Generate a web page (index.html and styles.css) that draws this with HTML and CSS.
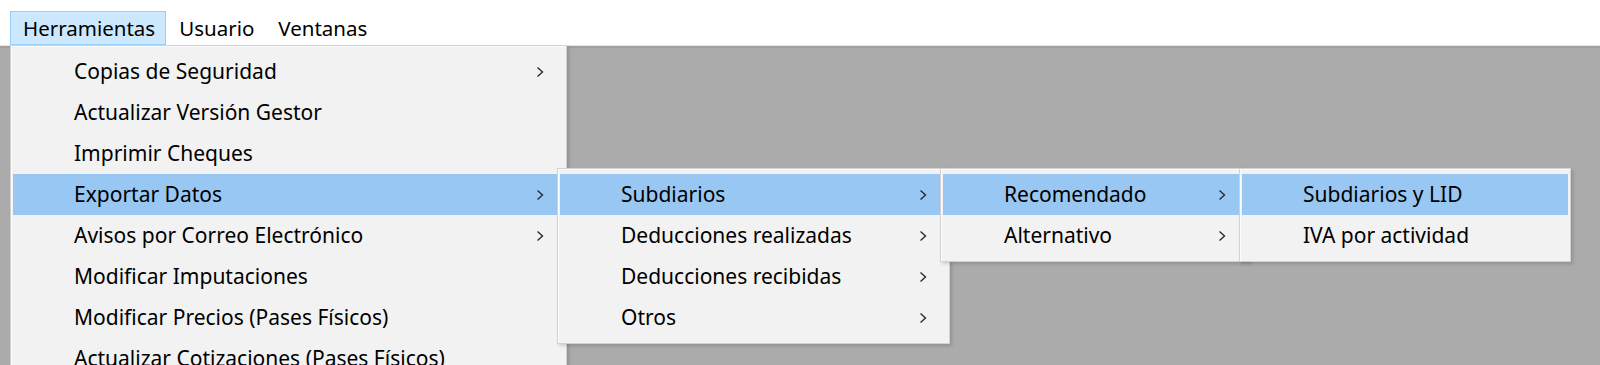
FILE: index.html
```html
<!DOCTYPE html>
<html>
<head>
    <title>Gestor - Herramientas</title>
    <meta charset="utf-8">
    <link rel="stylesheet" href="styles.css">
</head>
<body>
    <div class="window">
        <div class="menubar">
            <div class="bar-item open">Herramientas
                <div class="menu menu-main">
                    <div class="menu-item has-sub"><span class="label">Copias de Seguridad</span><svg class="arrow" viewBox="0 0 8 12"><polyline points="1.5,1.5 6.5,6 1.5,10.5"/></svg></div>
                    <div class="menu-item"><span class="label">Actualizar Versión Gestor</span></div>
                    <div class="menu-item"><span class="label">Imprimir Cheques</span></div>
                    <div class="menu-item has-sub active"><span class="label">Exportar Datos</span><svg class="arrow" viewBox="0 0 8 12"><polyline points="1.5,1.5 6.5,6 1.5,10.5"/></svg>
                        <div class="menu submenu menu-export">
                            <div class="menu-item has-sub active"><span class="label">Subdiarios</span><svg class="arrow" viewBox="0 0 8 12"><polyline points="1.5,1.5 6.5,6 1.5,10.5"/></svg>
                                <div class="menu submenu menu-subdiarios">
                                    <div class="menu-item has-sub active"><span class="label">Recomendado</span><svg class="arrow" viewBox="0 0 8 12"><polyline points="1.5,1.5 6.5,6 1.5,10.5"/></svg>
                                        <div class="menu submenu menu-recomendado">
                                            <div class="menu-item active"><span class="label">Subdiarios y LID</span></div>
                                            <div class="menu-item"><span class="label">IVA por actividad</span></div>
                                        </div>
                                    </div>
                                    <div class="menu-item has-sub"><span class="label">Alternativo</span><svg class="arrow" viewBox="0 0 8 12"><polyline points="1.5,1.5 6.5,6 1.5,10.5"/></svg></div>
                                </div>
                            </div>
                            <div class="menu-item has-sub"><span class="label">Deducciones realizadas</span><svg class="arrow" viewBox="0 0 8 12"><polyline points="1.5,1.5 6.5,6 1.5,10.5"/></svg></div>
                            <div class="menu-item has-sub"><span class="label">Deducciones recibidas</span><svg class="arrow" viewBox="0 0 8 12"><polyline points="1.5,1.5 6.5,6 1.5,10.5"/></svg></div>
                            <div class="menu-item has-sub"><span class="label">Otros</span><svg class="arrow" viewBox="0 0 8 12"><polyline points="1.5,1.5 6.5,6 1.5,10.5"/></svg></div>
                        </div>
                    </div>
                    <div class="menu-item has-sub"><span class="label">Avisos por Correo Electrónico</span><svg class="arrow" viewBox="0 0 8 12"><polyline points="1.5,1.5 6.5,6 1.5,10.5"/></svg></div>
                    <div class="menu-item"><span class="label">Modificar Imputaciones</span></div>
                    <div class="menu-item"><span class="label">Modificar Precios (Pases Físicos)</span></div>
                    <div class="menu-item"><span class="label">Actualizar Cotizaciones (Pases Físicos)</span></div>
                </div>
            </div>
            <div class="bar-item">Usuario</div>
            <div class="bar-item">Ventanas</div>
        </div>
        <div class="workspace"></div>
    </div>
</body>
</html>
```

FILE: styles.css
```css
* {
    margin: 0;
    padding: 0;
    box-sizing: border-box;
}

html, body {
    height: 100%;
    overflow: hidden;
}

body {
    font-family: "Noto Sans", "Open Sans", sans-serif;
    font-size: 21px;
    color: #000;
    background: #ababab;
}

.window {
    height: 100%;
    display: flex;
    flex-direction: column;
}

.menubar {
    display: flex;
    align-items: flex-start;
    height: 46px;
    padding: 11px 0 0 10px;
    background: #fff;
    border-bottom: 1px solid #e6e6e6;
}

.bar-item {
    position: relative;
    height: 34px;
    line-height: 32px;
    padding: 0 10px 0 12px;
    border: 1px solid transparent;
    font-size: 20.5px;
    white-space: nowrap;
}

.bar-item.open {
    background: #cce8ff;
    border-color: #99d1ff;
}

.workspace {
    flex: 1;
    background: #ababab;
    border-top: 2px solid #a0a0a0;
}

/* dropdowns */
.menu {
    position: absolute;
    z-index: 10;
    padding: 5px 2px;
    background: #f2f2f2;
    border: 1px solid #d2d2d2;
    box-shadow: 1px 1px 0 #fbfbfb inset, 2px 2px 3px rgba(0, 0, 0, 0.15);
    font-size: 21px;
}

.menu-main {
    top: calc(100% + 1px);
    left: -1px;
    width: 557px;
}

.submenu {
    top: -6px;
    left: calc(100% - 7px);
}

.menu-export {
    width: 393px;
}

.menu-subdiarios {
    width: 309px;
}

.menu-recomendado {
    width: 332px;
}

.menu-item {
    position: relative;
    display: flex;
    align-items: center;
    height: 41px;
    padding: 0 20px 0 61px;
    white-space: nowrap;
}

.menu-item.active {
    background: #99c7f3;
}

.menu-item .label {
    flex: 1;
    padding-bottom: 1px;
}

.arrow {
    width: 8px;
    height: 12px;
    fill: none;
    stroke: #2b2b2b;
    stroke-width: 1.4;
}
```
